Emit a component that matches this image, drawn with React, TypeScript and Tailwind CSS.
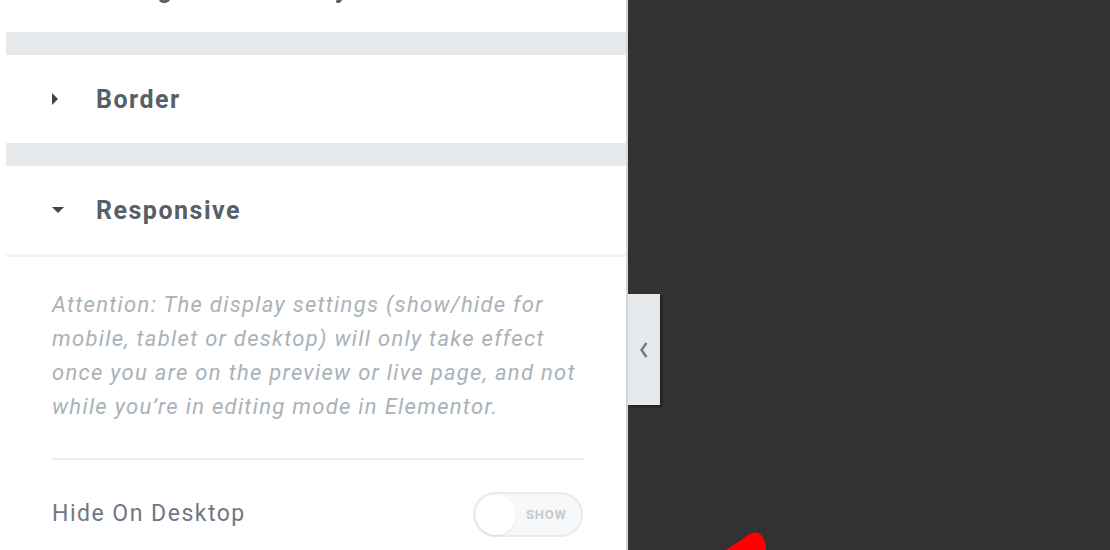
import React from "react";

function SectionBand() {
  return <div className="h-[23px] bg-[#e6e9ec]" />;
}

function SectionHeader({ title, open }: { title: string; open?: boolean }) {
  return (
    <div className="flex h-[88px] items-center">
      <div className="flex w-[90px] justify-start pl-[45px]">
        {open ? (
          <svg width="14" height="8" viewBox="0 0 14 8">
            <path d="M1 1 L13 1 L7 7 Z" fill="#3f474e" />
          </svg>
        ) : (
          <svg width="8" height="14" viewBox="0 0 8 14">
            <path d="M1 1 L7 7 L1 13 Z" fill="#3f474e" />
          </svg>
        )}
      </div>
      <span className="text-[25px] font-bold leading-none tracking-[1.5px] text-[#556068]">{title}</span>
    </div>
  );
}

function Toggle() {
  return (
    <div className="flex h-[45px] w-[110px] items-center rounded-full border-2 border-[#e9ebed] bg-[#f7f8f9] p-[1px]">
      <div className="h-[40px] w-[40px] rounded-full bg-white shadow-[0_1px_2px_rgba(0,0,0,0.08)]" />
      <span className="ml-[10px] text-[13px] font-bold uppercase tracking-[0.8px] text-[#c3cad0]">Show</span>
    </div>
  );
}

const notice = [
  "Attention: The display settings (show/hide for",
  "mobile, tablet or desktop) will only take effect",
  "once you are on the preview or live page, and not",
  "while you\u2019re in editing mode in Elementor.",
];

export default function App() {
  return (
    <div
      className="relative flex h-[550px] w-[1110px] overflow-hidden bg-[#323232]"
      style={{ fontFamily: "Roboto, 'Noto Sans', sans-serif" }}
    >
      <div className="flex w-[628px] shrink-0 flex-col border-r-2 border-[#d3d6d9] bg-white pl-[6px]">
        <div className="h-[32px] overflow-hidden">
          <div className="-mt-[24px] flex h-[26px] items-end pl-[90px]">
            <span className="text-[25px] font-bold leading-none tracking-[1.5px] text-[#556068]">Background Overlay</span>
          </div>
        </div>
        <SectionBand />
        <SectionHeader title="Border" />
        <SectionBand />
        <div className="border-b-[3px] border-[#f1f3f5]">
          <SectionHeader title="Responsive" open />
        </div>
        <div className="pl-[46px] pr-[43px] pt-[31px]">
          <p className="text-[22px] italic leading-[34px] tracking-[1.3px] text-[#a9b2b9]">
            {notice.map((line) => (
              <span key={line} className="block whitespace-nowrap">
                {line}
              </span>
            ))}
          </p>
          <div className="mt-[34px] h-[2px] bg-[#eceef0]" />
          <div className="mt-[32px] flex items-center justify-between">
            <span className="text-[23px] tracking-[1.5px] text-[#6d7882]">Hide On Desktop</span>
            <Toggle />
          </div>
        </div>
      </div>
      <div className="flex flex-1 items-start">
        <div className="mt-[294px] flex h-[111px] w-[32px] items-center justify-center bg-[#e6e9ec] shadow-[2px_2px_2px_rgba(0,0,0,0.35)]">
          <svg width="10" height="18" viewBox="0 0 10 18">
            <path d="M7.5 2 L2.5 9 L7.5 16" fill="none" stroke="#6d7882" strokeWidth="2.4" />
          </svg>
        </div>
      </div>
      <svg className="absolute left-[722px] top-[530px]" width="50" height="20" viewBox="0 0 50 20">
        <path d="M4 20 C12 14 20 10 26 5 C30 2 36 1 40 6 C43 10 44 15 44 20 Z" fill="#ff0000" />
      </svg>
    </div>
  );
}
